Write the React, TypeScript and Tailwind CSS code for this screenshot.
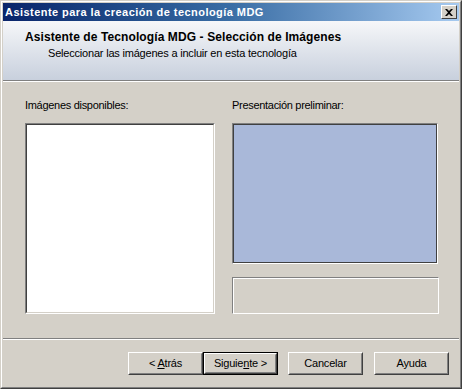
import React from 'react';

const font = { fontFamily: '"Liberation Sans", Arial, sans-serif' };

const Button = ({ children, isDefault = false }: { children: React.ReactNode; isDefault?: boolean }) => (
  <div className={`w-[75px] h-[23px] ${isDefault ? 'border border-black' : ''}`}>
    <div className="w-full h-full border border-t-white border-l-white border-b-[#404040] border-r-[#404040]">
      <div className="w-full h-full border border-t-[#d4d0c8] border-l-[#d4d0c8] border-b-[#808080] border-r-[#808080] flex items-center justify-center text-[11px] tracking-[-0.2px] text-black">
        {children}
      </div>
    </div>
  </div>
);

const App = () => {
  return (
    <div className="w-[462px] h-[389px] bg-[#d4d0c8] select-none" style={font}>
      {/* marco de la ventana */}
      <div className="w-full h-full border border-t-[#d4d0c8] border-l-[#d4d0c8] border-b-[#404040] border-r-[#404040]">
        <div className="w-full h-full border border-t-white border-l-white border-b-[#808080] border-r-[#808080] p-[1px] flex flex-col">
          {/* barra de título */}
          <div className="h-[18px] shrink-0 flex items-center justify-between pl-[2px] pr-[2px] bg-gradient-to-r from-[#0a246a] via-[#3a6ea5] to-[#a6caf0]">
            <span className="text-white font-bold text-[11px] tracking-[0.45px]">Asistente para la creación de tecnología MDG</span>
            <div className="w-[16px] h-[14px] bg-[#d4d0c8] border border-t-white border-l-white border-b-[#404040] border-r-[#404040] flex items-center justify-center">
              <svg width="8" height="7" viewBox="0 0 8 7">
                <path d="M0 0h2l2 2 2-2h2L5 3.5 8 7H6L4 5 2 7H0l3-3.5z" fill="#000" />
              </svg>
            </div>
          </div>

          {/* cabecera */}
          <div className="h-[60px] shrink-0 bg-gradient-to-b from-[#f6f7f9] to-[#c8d0dd] border-b border-b-[#808080] pl-[22px] pt-[9px]">
            <div className="text-[12px] font-bold text-black leading-[14px] tracking-[0.1px]">
              Asistente de Tecnología MDG - Selección de Imágenes
            </div>
            <div className="text-[11px] text-black leading-[13px] pl-[23px] mt-[3px] tracking-[-0.2px]">
              Seleccionar las imágenes a incluir en esta tecnología
            </div>
          </div>
          <div className="h-[1px] bg-white shrink-0" />

          {/* contenido */}
          <div className="flex gap-[17px] pl-[22px] pt-[17px]">
            <div className="flex flex-col w-[190px]">
              <div className="text-[11px] leading-[13px] text-black mb-[11px] tracking-[-0.3px]">Imágenes disponibles:</div>
              <div className="h-[191px] border border-t-[#808080] border-l-[#808080] border-b-white border-r-white">
                <div className="w-full h-full bg-white border border-t-[#404040] border-l-[#404040] border-b-[#d4d0c8] border-r-[#d4d0c8]" />
              </div>
            </div>
            <div className="flex flex-col w-[207px]">
              <div className="text-[11px] leading-[13px] text-black mb-[11px] tracking-[-0.3px]">Presentación preliminar:</div>
              <div className="h-[141px] w-[206px] border border-t-[#808080] border-l-[#808080] border-b-white border-r-white">
                <div className="w-full h-full bg-[#a9b8d9] border border-[#404040]" />
              </div>
              <div className="h-[37px] mt-[13px] border border-t-[#808080] border-l-[#808080] border-b-white border-r-white">
                <div className="w-full h-full border-t border-l border-t-white border-l-white" />
              </div>
            </div>
          </div>

          {/* separador */}
          <div className="mt-[24px] h-[1px] bg-[#808080] shrink-0" />
          <div className="h-[1px] bg-white shrink-0" />

          {/* botones */}
          <div className="flex justify-end pr-[10px] pt-[12px]">
            <Button>
              <span>&lt; <span className="underline">A</span>trás</span>
            </Button>
            <Button isDefault>
              <span>Siguie<span className="underline">n</span>te &gt;</span>
            </Button>
            <div className="ml-[10px]">
              <Button>Cancelar</Button>
            </div>
            <div className="ml-[11px]">
              <Button>Ayuda</Button>
            </div>
          </div>
        </div>
      </div>
    </div>
  );
};

export default App;
